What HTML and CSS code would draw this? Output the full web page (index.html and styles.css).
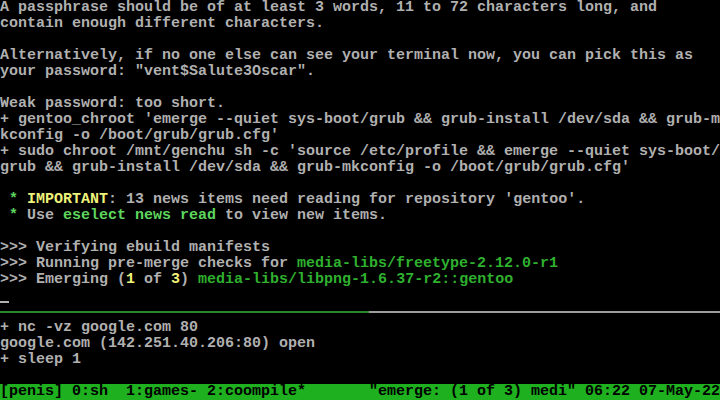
FILE: index.html
```html
<!DOCTYPE html>
<html lang="en">
<head>
    <meta charset="UTF-8">
    <title>tmux - genchu</title>
    <link rel="stylesheet" href="styles.css">
</head>
<body>
    <div class="screen">
        <div class="pane top">
            <div class="line">A passphrase should be of at least 3 words, 11 to 72 characters long, and</div>
            <div class="line">contain enough different characters.</div>
            <div class="line"></div>
            <div class="line">Alternatively, if no one else can see your terminal now, you can pick this as</div>
            <div class="line">your password: "vent$Salute3Oscar".</div>
            <div class="line"></div>
            <div class="line">Weak password: too short.</div>
            <div class="line">+ gentoo_chroot 'emerge --quiet sys-boot/grub &amp;&amp; grub-install /dev/sda &amp;&amp; grub-m</div>
            <div class="line">kconfig -o /boot/grub/grub.cfg'</div>
            <div class="line">+ sudo chroot /mnt/genchu sh -c 'source /etc/profile &amp;&amp; emerge --quiet sys-boot/</div>
            <div class="line">grub &amp;&amp; grub-install /dev/sda &amp;&amp; grub-mkconfig -o /boot/grub/grub.cfg'</div>
            <div class="line"></div>
            <div class="line"> <span class="good">*</span> <span class="warn">IMPORTANT</span>: 13 news items need reading for repository 'gentoo'.</div>
            <div class="line"> <span class="good">*</span> Use <span class="good">eselect news read</span> to view new items.</div>
            <div class="line"></div>
            <div class="line">&gt;&gt;&gt; Verifying ebuild manifests</div>
            <div class="line">&gt;&gt;&gt; Running pre-merge checks for <span class="pkg">media-libs/freetype-2.12.0-r1</span></div>
            <div class="line">&gt;&gt;&gt; Emerging (<span class="warn">1</span> of <span class="warn">3</span>) <span class="pkg">media-libs/libpng-1.6.37-r2::gentoo</span></div>
            <div class="line"><span class="cursor"></span></div>
        </div>

        <div class="border">
            <span class="border-active"></span>
            <span class="border-idle"></span>
        </div>

        <div class="pane bottom">
            <div class="line">+ nc -vz google.com 80</div>
            <div class="line">google.com (142.251.40.206:80) open</div>
            <div class="line">+ sleep 1</div>
            <div class="line"></div>
        </div>

        <div class="status">
            <span>[penis] 0:sh  1:games- 2:coompile*</span>
            <span>"emerge: (1 of 3) medi" 06:22 07-May-22</span>
        </div>
    </div>
</body>
</html>
```

FILE: styles.css
```css
html, body {
    margin: 0;
    padding: 0;
    background: #000;
}
.screen {
    width: 720px;
    height: 400px;
    overflow: hidden;
    background: #000;
    color: #b0b0b0;
    font-family: "Liberation Mono", "DejaVu Sans Mono", monospace;
    font-size: 15px;
    font-weight: bold;
    line-height: 16px;
}
.line {
    height: 16px;
    white-space: pre;
}
.good {
    color: #5ed65e;
}
.warn {
    color: #eef27a;
}
.pkg {
    color: #2fb02f;
}
.cursor {
    display: inline-block;
    width: 9px;
    height: 2px;
    margin-top: 13px;
    vertical-align: top;
    background: #b0b0b0;
}
.border {
    display: flex;
    align-items: center;
    height: 16px;
}
.border-active {
    width: 369px;
    height: 2px;
    background: #2c862c;
}
.border-idle {
    flex: 1;
    height: 2px;
    background: #9c9c9c;
}
.status {
    display: flex;
    justify-content: space-between;
    height: 16px;
    white-space: pre;
    background: #1eb01e;
    color: #000;
}
```
